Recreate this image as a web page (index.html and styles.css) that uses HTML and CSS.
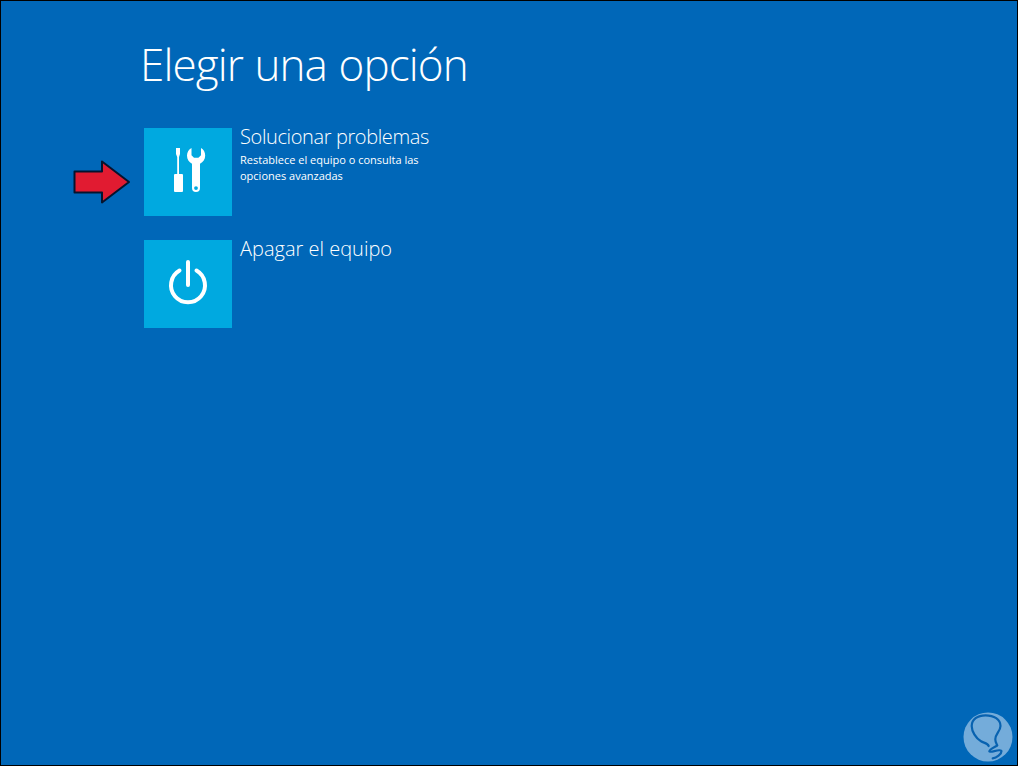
FILE: index.html
```
<!DOCTYPE html>
<html lang="es">

<head>
    <meta charset="UTF-8">
    <meta name="viewport" content="width=device-width, initial-scale=1.0">
    <title>Elegir una opción</title>
    <link rel="stylesheet" href="styles.css">
</head>

<body>

    <main class="screen">
        <h1>Elegir una opción</h1>

        <div class="options">
            <div class="option">
                <svg class="arrow" viewBox="0 0 60 46">
                    <path d="M2.500 12.500H30V2.500L57 23L30 43.500V33.500H2.500Z" />
                </svg>
                <div class="tile">
                    <svg viewBox="0 0 88 88">
                        <path d="M32 20h4v6l-1 3v17h3q1 0 1 1v16q0 1-1 1h-7q-1 0-1-1v-16q0-1 1-1h2.200V29l-1.200-3z" />
                        <path fill-rule="evenodd" d="M47.500 20v7.200l2.500 2.600h4.400l2.600-2.600V20c2.600 1.500 4.200 4.300 4.200 7.500 0 3.700-2.100 6.800-5.200 8.200V60a4 4 0 0 1-8 0V35.700c-3.100-1.400-5-4.500-5-8.200 0-3.200 1.800-6 4.500-7.500zM52 58.200a1.900 1.900 0 1 0 0 3.800a1.900 1.900 0 1 0 0-3.800z" />
                    </svg>
                </div>
                <div class="text">
                    <h2 class="troubleshoot">Solucionar problemas</h2>
                    <p>Restablece el equipo o consulta las<br>opciones avanzadas</p>
                </div>
            </div>

            <div class="option">
                <div class="tile">
                    <svg class="power" viewBox="0 0 88 88">
                        <path d="M44 22V45" />
                        <path d="M35.500 30.600A17 17 0 1 0 52.500 30.600" />
                    </svg>
                </div>
                <div class="text">
                    <h2>Apagar el equipo</h2>
                </div>
            </div>
        </div>

        <svg class="watermark" viewBox="0 0 50 50">
            <circle cx="25" cy="25" r="24.500" />
            <path d="M25.700 34C24.500 31 21 31 18 29.300C13 26.500 8.700 19.500 8.700 14C8.700 7.500 14.500 3.300 22.500 3.300C31 3.300 37.500 7.500 37.500 14C37.500 19 32.300 22 32.300 27.300C32.300 30 33.500 31.500 34.300 33.500C31.500 35.200 26 37.500 26.300 39.500C26.800 41 38 36.500 38.500 39C38.700 42 33.500 45.700 29.700 46.300" />
        </svg>
    </main>

</body>

</html>
```

FILE: styles.css
```
body {
    margin: 0;
    font-family: "Open Sans", "Noto Sans", sans-serif;
    color: #fff;
    background-color: #0067b8;
}

.screen {
    position: relative;
    box-sizing: border-box;
    height: 100vh;
    padding: 33px 0 0 139px;
    border: 1px solid #000;
    overflow: hidden;
}

h1,
h2,
p {
    margin: 0;
    font-weight: 300;
    white-space: nowrap;
}

h1 {
    font-size: 44px;
    line-height: 60px;
    letter-spacing: -0.900px;
    word-spacing: 1px;
}

.options {
    display: flex;
    flex-direction: column;
    gap: 24px;
    margin: 34px 0 0 4px;
}

.option {
    position: relative;
    display: flex;
    gap: 8px;
}

.tile {
    width: 88px;
    height: 88px;
    background-color: #00a9e0;
}

.tile svg {
    display: block;
    fill: #fff;
}

.tile .power {
    fill: none;
    stroke: #fff;
    stroke-width: 4;
    stroke-linecap: round;
}

.text {
    margin-top: -5px;
}

h2 {
    font-size: 20px;
    line-height: 28px;
}

.troubleshoot {
    letter-spacing: -0.380px;
}

p {
    margin-top: 1px;
    font-size: 11px;
    font-weight: 400;
    line-height: 16px;
}

/* red pointer beside the first option */
.arrow {
    position: absolute;
    left: -72px;
    top: 31px;
    width: 60px;
    height: 46px;
    fill: #e11b31;
    stroke: #06142e;
    stroke-width: 2;
    stroke-linejoin: round;
}

.watermark {
    position: absolute;
    right: 4px;
    bottom: 3px;
    width: 50px;
    height: 50px;
    fill: #74acda;
}

.watermark path {
    fill: none;
    stroke: #0862b0;
    stroke-width: 2.200;
    stroke-linecap: round;
    stroke-linejoin: round;
}
```
